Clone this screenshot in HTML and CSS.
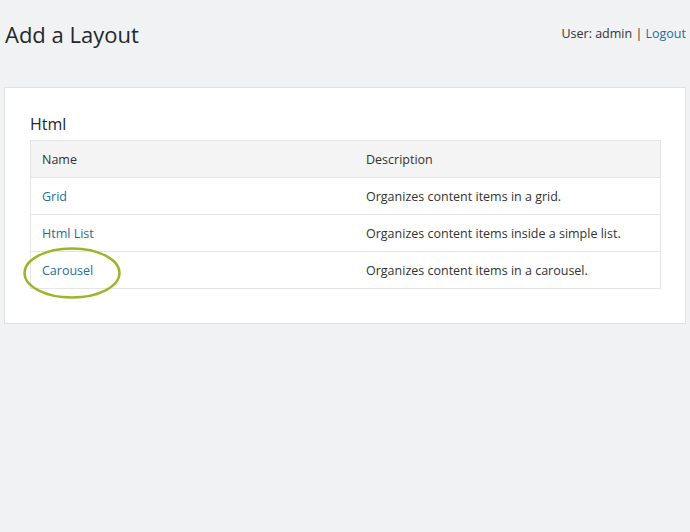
FILE: index.html
```html
<!DOCTYPE html>
<html>
<head>
<meta charset="utf-8">
<link rel="stylesheet" href="styles.css">
</head>
<body>
<div class="page">
  <header class="top">
    <h1 class="title">Add a Layout</h1>
    <div class="user">User: admin | <a href="#" class="link">Logout</a></div>
  </header>
  <section class="card">
    <h2 class="group">Html</h2>
    <table class="grid">
      <thead>
        <tr><th class="c-name">Name</th><th>Description</th></tr>
      </thead>
      <tbody>
        <tr><td class="c-name"><a href="#" class="link">Grid</a></td><td>Organizes content items in a grid.</td></tr>
        <tr><td class="c-name"><a href="#" class="link">Html List</a></td><td>Organizes content items inside a simple list.</td></tr>
        <tr><td class="c-name"><span class="mark"><a href="#" class="link">Carousel</a><svg class="ring" width="100" height="54" viewBox="0 0 100 54"><ellipse cx="50" cy="27" rx="47.5" ry="24.5" fill="none" stroke="#9db52c" stroke-width="2.4"/></svg></span></td><td>Organizes content items in a carousel.</td></tr>
      </tbody>
    </table>
  </section>
</div>
</body>
</html>
```
FILE: styles.css
```css
html, body {
  margin: 0;
  padding: 0;
  background: #f1f2f4;
}
body {
  font-family: "Open Sans", "Noto Sans", sans-serif;
  color: #333;
  font-size: 12.5px;
}
.page {
  padding: 0 4px;
}
.top {
  display: flex;
  justify-content: space-between;
  align-items: flex-start;
  height: 87px;
}
.title {
  margin: 19px 0 0 1px;
  font-size: 22px;
  font-weight: 400;
  color: #23282d;
}
.user {
  margin-top: 25px;
  font-size: 12.5px;
  color: #333;
}
.link {
  color: #22709a;
  text-decoration: none;
}
.card {
  background: #fff;
  border: 1px solid #e1e2e4;
  padding: 26px 24px 34px 25px;
}
.group {
  margin: 0 0 6px 0;
  font-size: 16px;
  font-weight: 400;
  color: #23282d;
  line-height: 20px;
}
.grid {
  width: 100%;
  border-collapse: collapse;
  border: 1px solid #e5e5e5;
}
.grid th, .grid td {
  height: 36px;
  padding: 0 12px 0 11px;
  text-align: left;
  font-weight: 400;
  border-bottom: 1px solid #e5e5e5;
  color: #333;
}
.grid thead th {
  background: #f4f4f4;
}
.c-name {
  width: 301px;
}
.mark {
  position: relative;
}
.ring {
  position: absolute;
  left: -20px;
  top: -16px;
}
```
